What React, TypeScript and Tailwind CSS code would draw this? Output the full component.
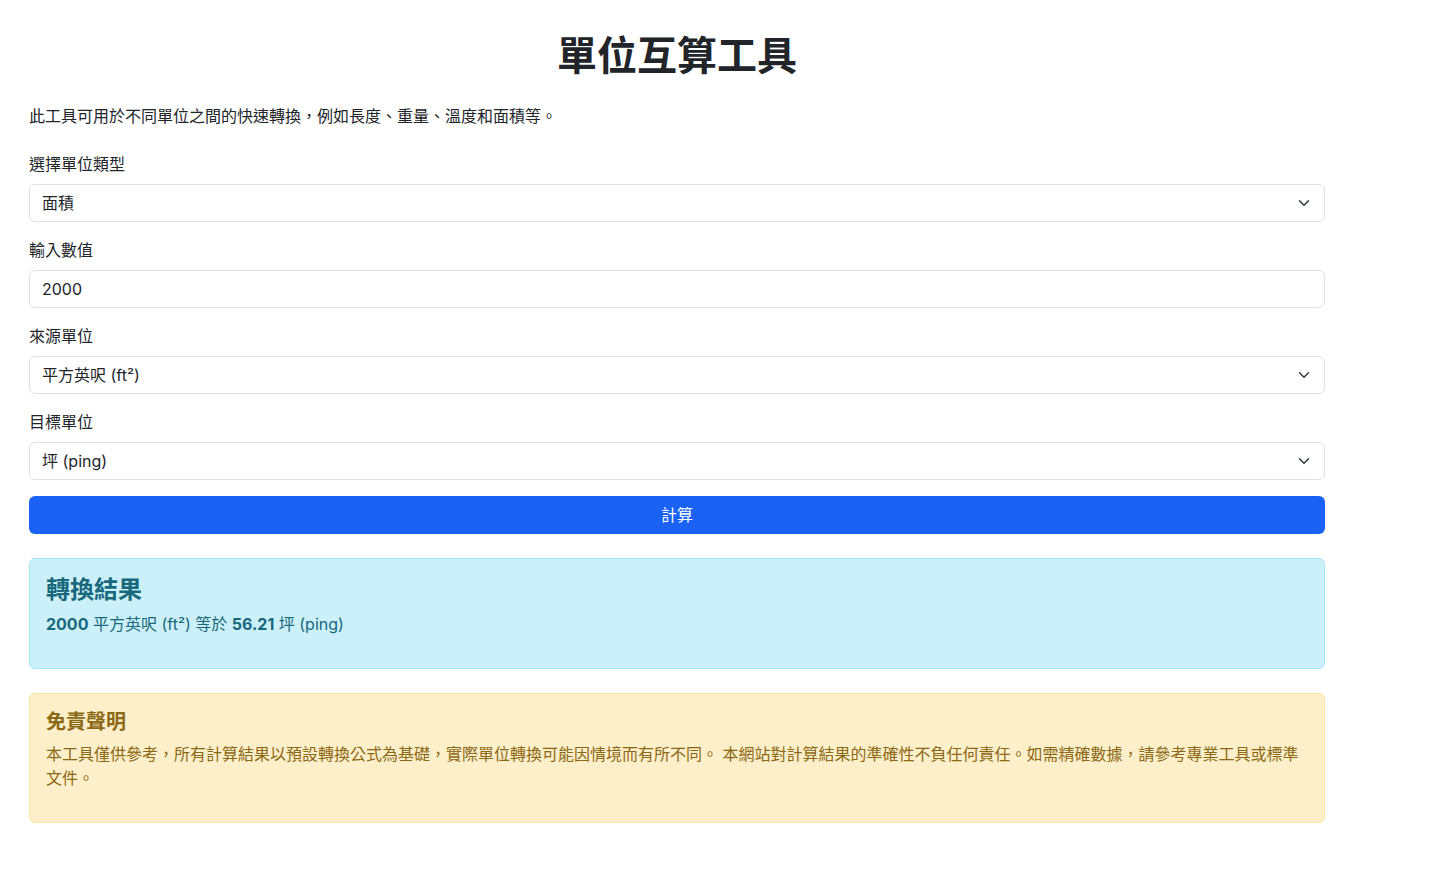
import { useState } from "react";

const font = 'font-["Inter","Noto_Sans_CJK_TC",sans-serif]';

function Chevron() {
    return (
        <svg
            className="pointer-events-none absolute right-[15px] top-1/2 -translate-y-1/2"
            width="12"
            height="12"
            viewBox="0 0 16 16"
        >
            <path d="m2 5 6 6 6-6" fill="none" stroke="#343a40" strokeWidth="2" strokeLinecap="round" strokeLinejoin="round" />
        </svg>
    );
}

interface SelectProps {
    value: string;
    options: string[];
    onChange: (v: string) => void;
}

function Select({ value, options, onChange }: SelectProps) {
    return (
        <div className="relative">
            <select
                value={value}
                onChange={e => onChange(e.target.value)}
                className={`block h-[38px] w-full appearance-none rounded-[6px] border border-[#dee2e6] bg-white pl-3 pr-9 text-base leading-6 text-[#212529] outline-none ${font}`}
            >
                {options.map(o => (
                    <option key={o} value={o}>{o}</option>
                ))}
            </select>
            <Chevron />
        </div>
    );
}

export default function App() {
    const [type, setType] = useState('面積');
    const [amount, setAmount] = useState('2000');
    const [from, setFrom] = useState('平方英呎 (ft²)');
    const [to, setTo] = useState('坪 (ping)');

    return (
        <div className={`min-h-screen bg-white text-[#212529] ${font}`}>
            <div className="ml-[29px] w-[1296px] pt-8">
                <h1 className="mb-6 text-center text-[40px] font-bold leading-[48px]">單位互算工具</h1>
                <p className="mb-6 text-base leading-6">此工具可用於不同單位之間的快速轉換，例如長度、重量、溫度和面積等。</p>

                <div className="mb-4">
                    <label className="mb-2 block text-base leading-6">選擇單位類型</label>
                    <Select value={type} options={['長度', '重量', '溫度', '面積']} onChange={setType} />
                </div>
                <div className="mb-4">
                    <label className="mb-2 block text-base leading-6">輸入數值</label>
                    <input
                        type="text"
                        value={amount}
                        onChange={e => setAmount(e.target.value)}
                        className={`block h-[38px] w-full rounded-[6px] border border-[#dee2e6] bg-white px-3 text-base text-[#212529] outline-none ${font}`}
                    />
                </div>
                <div className="mb-4">
                    <label className="mb-2 block text-base leading-6">來源單位</label>
                    <Select value={from} options={['平方公尺 (m²)', '平方英呎 (ft²)', '坪 (ping)']} onChange={setFrom} />
                </div>
                <div className="mb-4">
                    <label className="mb-2 block text-base leading-6">目標單位</label>
                    <Select value={to} options={['平方公尺 (m²)', '平方英呎 (ft²)', '坪 (ping)']} onChange={setTo} />
                </div>

                <button className="block h-[38px] w-full rounded-[6px] bg-[#1a62f5] text-base font-normal text-white">
                    計算
                </button>

                <div className="mt-6 rounded-[6px] border border-[#a3e6f5] bg-[#cbf0fa] p-4 text-[#16687b]">
                    <h4 className="mb-2 text-2xl font-semibold leading-[29px]">轉換結果</h4>
                    <p className="mb-4 text-base leading-6">
                        <strong className="font-bold">2000</strong> 平方英呎 (ft²) 等於 <strong className="font-bold">56.21</strong> 坪 (ping)
                    </p>
                </div>

                <div className="mt-6 rounded-[6px] border border-[#fde59d] bg-[#fdefc9] p-4 text-[#8b6914]">
                    <h5 className="mb-2 text-xl font-semibold leading-6">免責聲明</h5>
                    <p className="mb-4 text-base leading-6">
                        本工具僅供參考，所有計算結果以預設轉換公式為基礎，實際單位轉換可能因情境而有所不同。 本網站對計算結果的準確性不負任何責任。如需精確數據，請參考專業工具或標準文件。
                    </p>
                </div>
            </div>
        </div>
    );
}
